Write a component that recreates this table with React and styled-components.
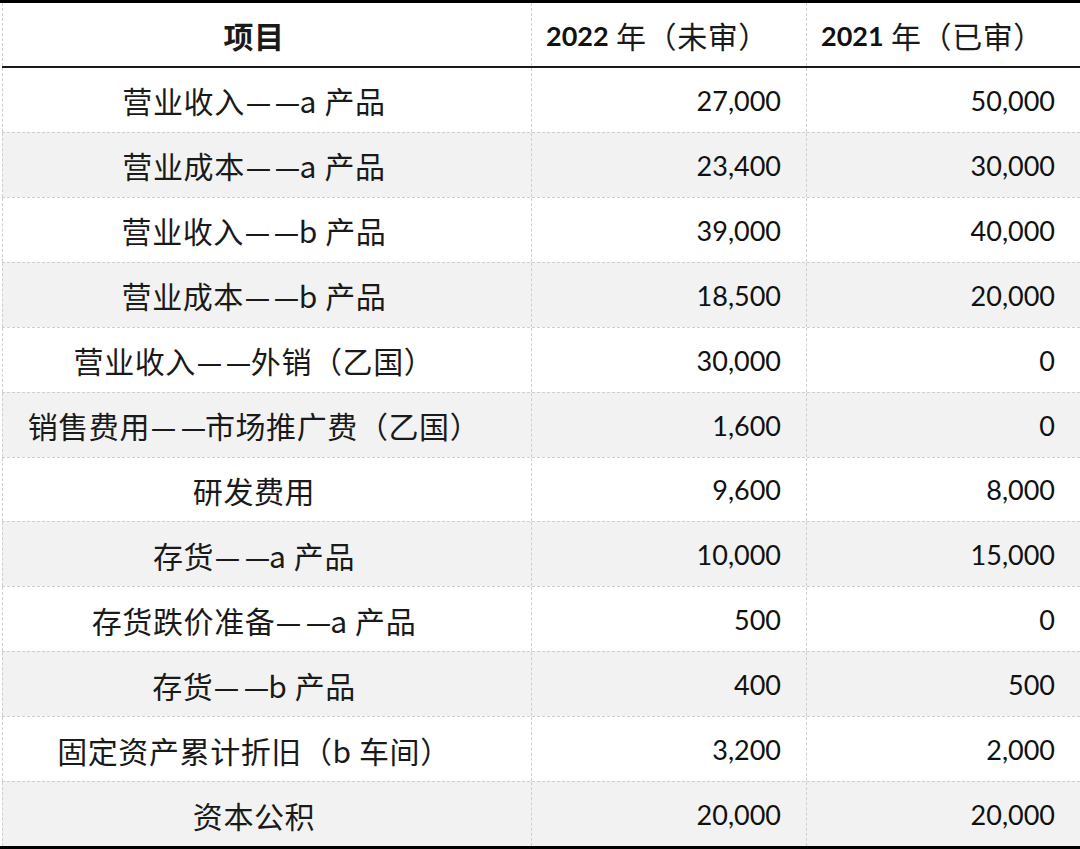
import React from "react";
import styled, { createGlobalStyle } from "styled-components";

const Global = createGlobalStyle`
  html, body { margin: 0; padding: 0; background: #fff; }
  body { font-family: Lato, "Noto Sans CJK SC", sans-serif; color: #111; }
`;

const Table = styled.div`
  width: 1080px;
  height: 849px;
  box-sizing: border-box;
  border-top: 3px solid #000;
  border-bottom: 3px solid #000;
  padding-left: 2px;
  display: flex;
  flex-direction: column;
  background: #fff;
`;

const Row = styled.div`
  display: grid;
  grid-template-columns: 529px 275px 1fr;
  flex: ${(p) => (p.$head ? "0 0 65px" : "1 1 0")};
  background: ${(p) => (p.$shade ? "#f2f2f2" : "#fff")};
  border-bottom: ${(p) => (p.$head ? "2px solid #1a1a1a" : "none")};
  border-top: ${(p) => (p.$divided ? "1px dashed #cfcfcf" : "none")};
  box-sizing: border-box;
`;

const Cell = styled.div`
  border-left: 1px dashed #cfcfcf;
  display: flex;
  align-items: center;
  box-sizing: border-box;
  white-space: nowrap;
  padding-top: 1px;
  justify-content: ${(p) =>
    p.$align === "left" ? "flex-start" : p.$align === "right" ? "flex-end" : "center"};
  padding-left: ${(p) => (p.$align === "left" ? "14px" : "0")};
  padding-right: ${(p) => (p.$align === "right" ? "25px" : p.$align === "left" ? "0" : "26px")};
`;

const Label = styled.span`
  font-family: "Noto Sans CJK SC", sans-serif;
  font-size: 30px;
  letter-spacing: 0.6px;
  font-weight: ${(p) => (p.$bold ? 700 : 400)};
  color: #1a1a1a;
`;

const Dash = styled.span`
  display: inline-block;
  transform: scaleX(0.95);
  margin-right: ${(p) => (p.$gap ? "2px" : "-2px")};
`;

const Num = styled.span`
  font-family: Lato, sans-serif;
  font-size: 27px;
  font-weight: ${(p) => (p.$bold ? 700 : 400)};
  color: #111;
`;

const rows = [
  ["营业收入——a 产品", "27,000", "50,000"],
  ["营业成本——a 产品", "23,400", "30,000"],
  ["营业收入——b 产品", "39,000", "40,000"],
  ["营业成本——b 产品", "18,500", "20,000"],
  ["营业收入——外销（乙国）", "30,000", "0"],
  ["销售费用——市场推广费（乙国）", "1,600", "0"],
  ["研发费用", "9,600", "8,000"],
  ["存货——a 产品", "10,000", "15,000"],
  ["存货跌价准备——a 产品", "500", "0"],
  ["存货——b 产品", "400", "500"],
  ["固定资产累计折旧（b 车间）", "3,200", "2,000"],
  ["资本公积", "20,000", "20,000"],
];

function LabelText({ text }) {
  const parts = text.split("——");
  if (parts.length === 1) return <Label>{text}</Label>;
  return (
    <Label>
      {parts[0]}
      <Dash $gap>—</Dash>
      <Dash>—</Dash>
      {parts[1]}
    </Label>
  );
}

export default function App() {
  return (
    <>
      <Global />
      <Table>
        <Row $head>
          <Cell>
            <Label $bold>项目</Label>
          </Cell>
          <Cell $align="left">
            <Num $bold>2022</Num>
            <Label>&nbsp;年（未审）</Label>
          </Cell>
          <Cell $align="left">
            <Num $bold>2021</Num>
            <Label>&nbsp;年（已审）</Label>
          </Cell>
        </Row>
        {rows.map((r, i) => (
          <Row key={i} $shade={i % 2 === 1} $divided={i > 0}>
            <Cell>
              <LabelText text={r[0]} />
            </Cell>
            <Cell $align="right">
              <Num>{r[1]}</Num>
            </Cell>
            <Cell $align="right">
              <Num>{r[2]}</Num>
            </Cell>
          </Row>
        ))}
      </Table>
    </>
  );
}
